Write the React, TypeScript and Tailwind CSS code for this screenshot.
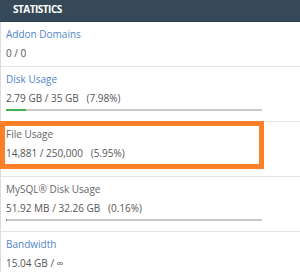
import React from 'react';

type Stat = { label: string; value: string; link?: boolean; pct?: number; highlight?: boolean };

const STATS: Stat[] = [
  { label: 'Addon Domains', value: '0 / 0', link: true },
  { label: 'Disk Usage', value: '2.79 GB / 35 GB   (7.98%)', link: true, pct: 7.98 },
  { label: 'File Usage', value: '14,881 / 250,000   (5.95%)', pct: 5.95, highlight: true },
  { label: 'MySQL® Disk Usage', value: '51.92 MB / 32.26 GB   (0.16%)', pct: 0.16 },
  { label: 'Bandwidth', value: '15.04 GB / ∞', link: true },
];

function StatRow({ s }: { s: Stat }) {
  return (
    <div className={`relative border-b border-[#e4e4e4] pl-[5px] pt-[2px] ${s.pct !== undefined ? 'pb-[10px]' : 'pb-[4px]'}`}>
      <div className={`text-[10px] leading-[20px] ${s.link ? 'text-[#4f86c8]' : 'text-[#666]'}`}>{s.label}</div>
      <div className="text-[10px] leading-[18px] text-[#555] whitespace-pre">{s.value}</div>
      {s.pct !== undefined && (
        <div className="mt-[2px] h-[2px] w-[256px] bg-[#c9c9c9]">
          <div className="h-full bg-[#3fb34f]" style={{ width: `${Math.max(s.pct, 0.5)}%` }} />
        </div>
      )}
      {s.highlight && (
        <div className="absolute left-[-1px] top-[-1px] h-[48px] w-[264px] border-[5px] border-[#fd7f28]" />
      )}
    </div>
  );
}

export default function App() {
  return (
    <div className="w-[300px] h-[272px] overflow-hidden bg-white" style={{ fontFamily: '"Open Sans", "Liberation Sans", sans-serif' }}>
      <div className="h-[22px] bg-[#364959] border-b border-[#2b3b49] pl-[13px] pt-[2px] text-[10px] leading-[14px] font-bold text-white tracking-[-0.5px]">
        STATISTICS
      </div>
      <div className="border-l border-[#dcdcdc]">
        {STATS.map(s => <StatRow key={s.label} s={s} />)}
      </div>
    </div>
  );
}
